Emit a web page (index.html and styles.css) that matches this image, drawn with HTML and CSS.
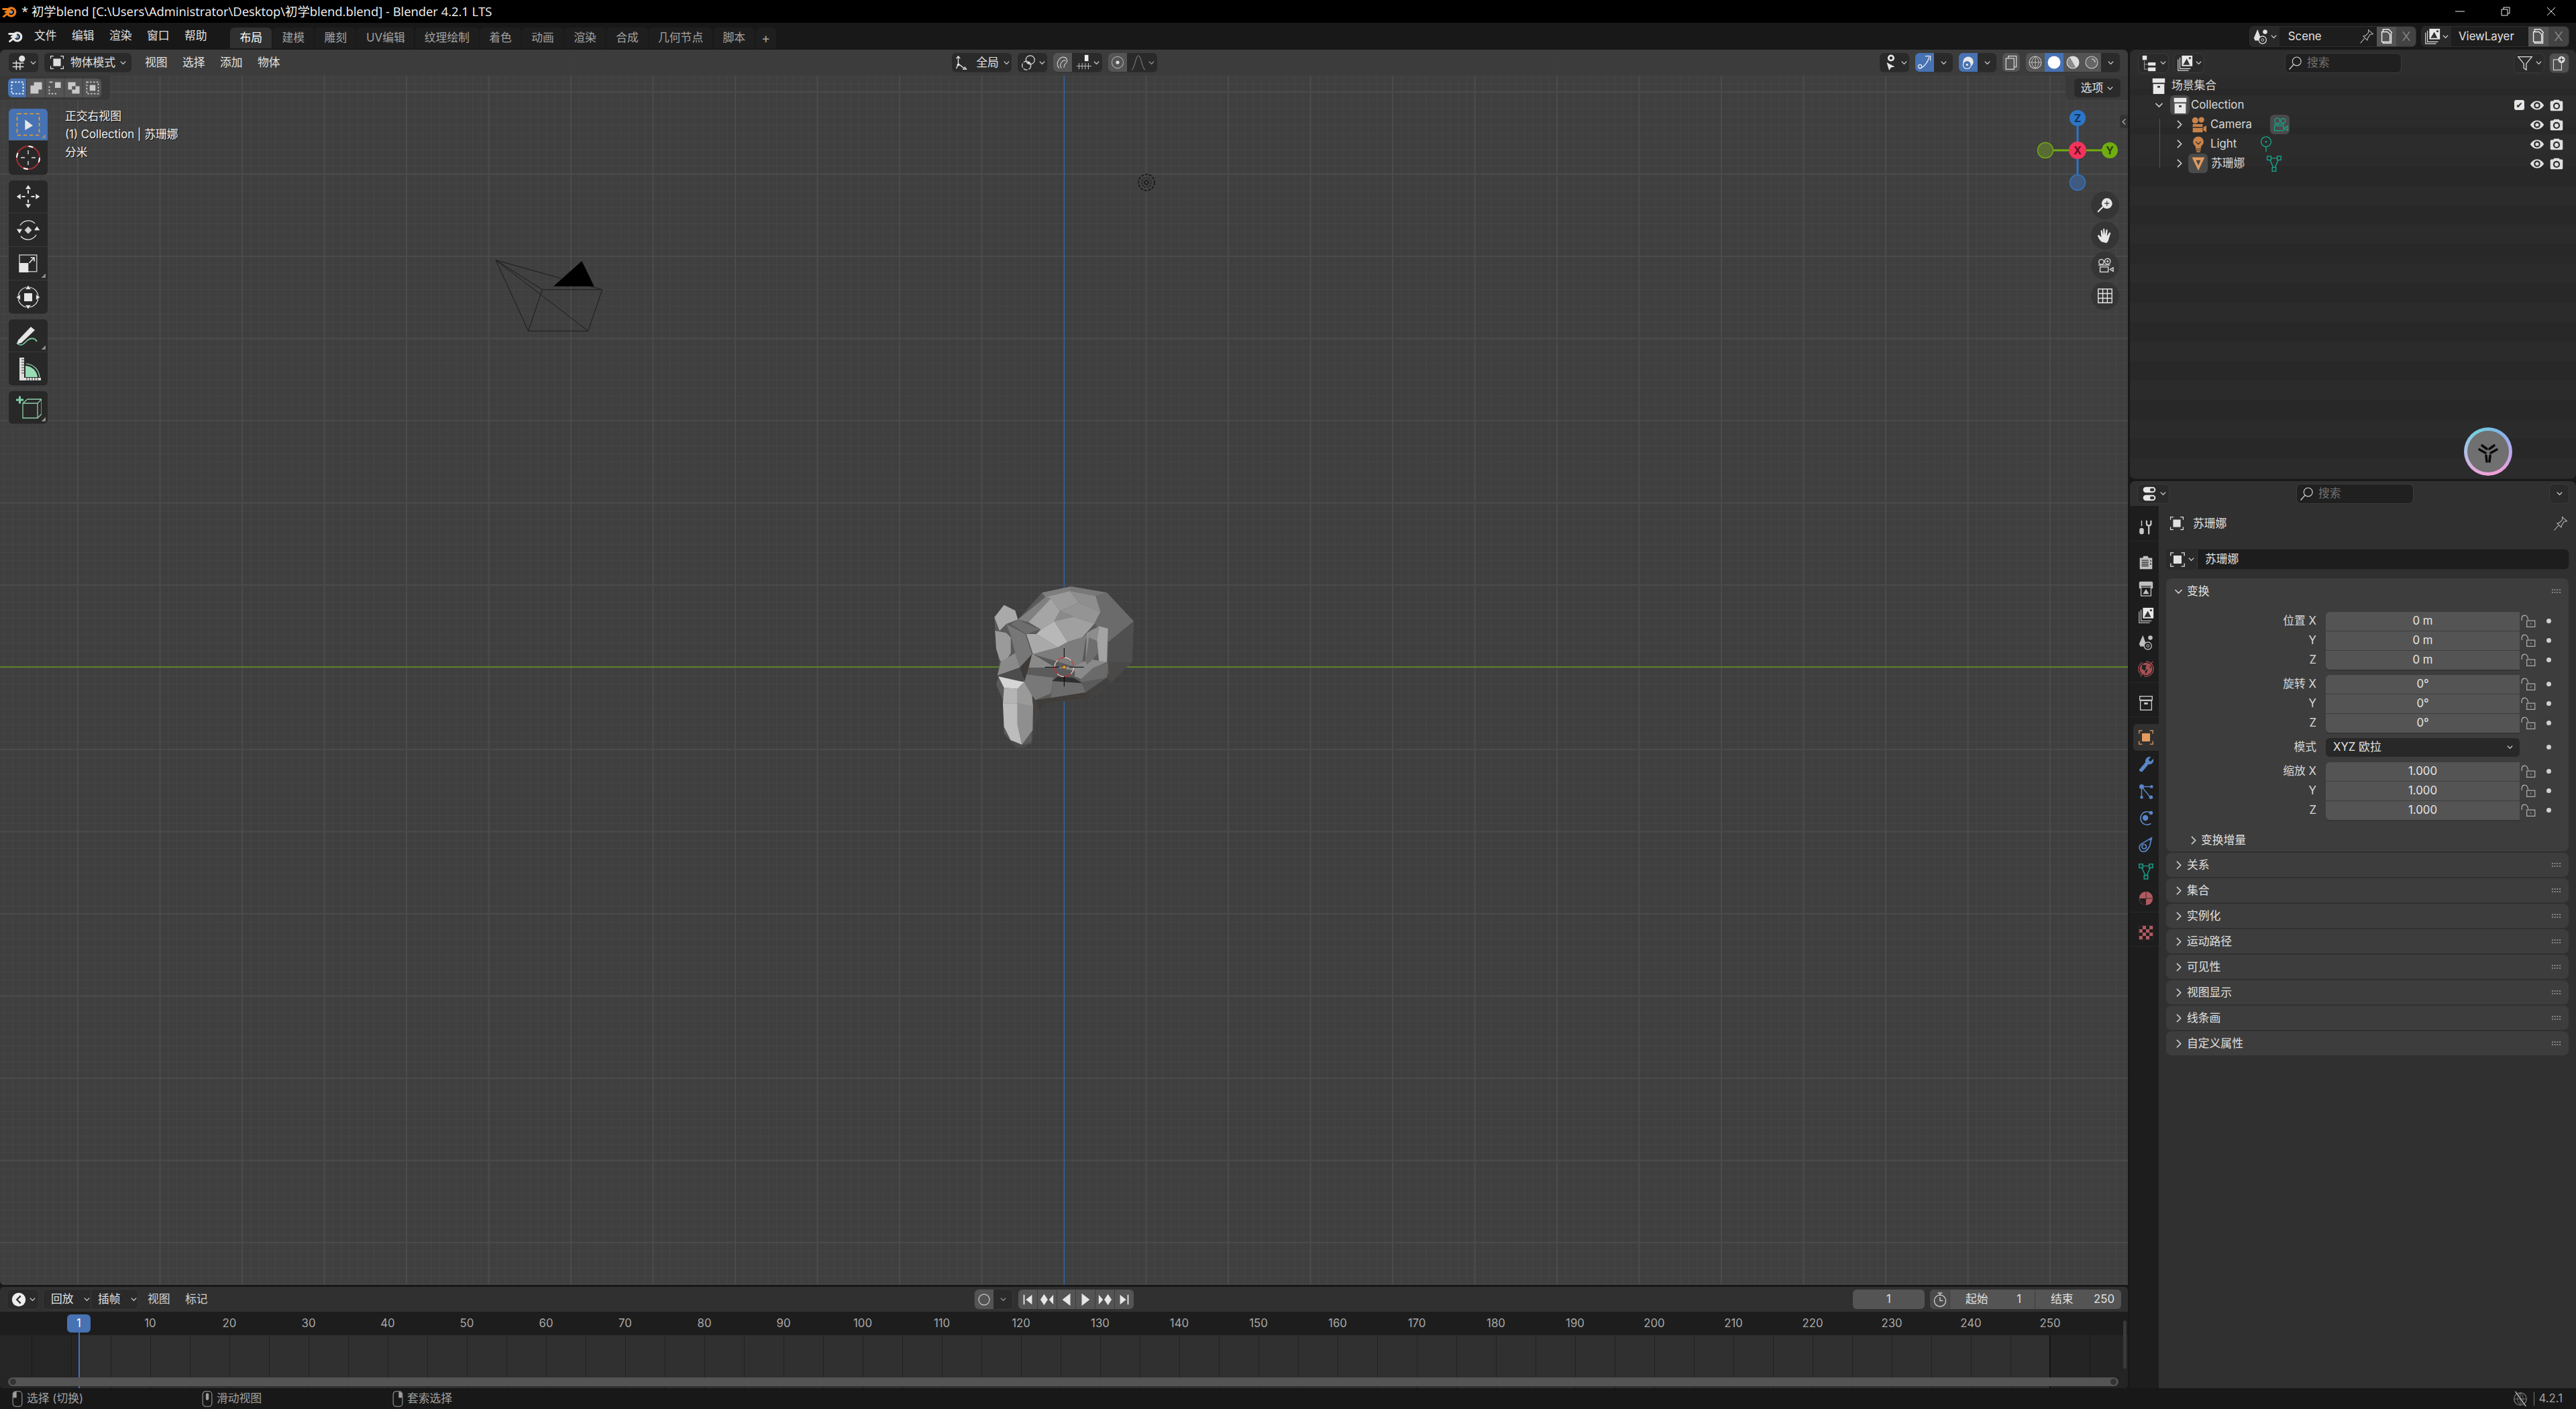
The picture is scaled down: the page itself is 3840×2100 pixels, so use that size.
FILE: index.html
```html
<!DOCTYPE html>
<html lang="zh-CN">
<head>
<meta charset="utf-8">
<title>Blender</title>
<link rel="stylesheet" href="styles.css">
</head>
<body>
<svg class="defs" aria-hidden="true">
  <symbol id="blender" viewBox="0 0 28 28"><circle cx="16" cy="15" r="7" fill="none" stroke="currentColor" stroke-width="4"/><circle cx="16" cy="15" r="3" fill="#6f93c4"/><path d="M2 10h12M6 15l8-2M3 23l10-8" fill="none" stroke="currentColor" stroke-width="3.4" stroke-linecap="round"/></symbol>
  <symbol id="view3d" viewBox="0 0 28 28"><circle cx="18" cy="8" r="5" fill="currentColor"/><path d="M3 15h18M3 21h18M9 11v15M15 15v11" fill="none" stroke="currentColor" stroke-width="1.6"/></symbol>
  <symbol id="object" viewBox="0 0 28 28"><path d="M8 3H3v5M20 3h5v5M3 20v5h5M25 20v5h-5" fill="none" stroke="currentColor" stroke-width="1.4"/><rect x="7.5" y="7.5" width="13" height="13" fill="currentColor"/></symbol>
  <symbol id="chev-d" viewBox="0 0 12 12"><path d="M2 4l4 4 4-4" fill="none" stroke="currentColor" stroke-width="1.4"/></symbol>
  <symbol id="chev-r" viewBox="0 0 12 12"><path d="M4 1.5L8.5 6 4 10.5" fill="none" stroke="currentColor" stroke-width="1.3"/></symbol>
  <symbol id="sel1" viewBox="0 0 28 28"><rect x="4" y="4" width="20" height="20" fill="none" stroke="#fff" stroke-width="2" stroke-dasharray="3 2.6"/></symbol>
  <symbol id="sel2" viewBox="0 0 28 28"><path d="M10 4h14v13h-6v7H4V10h6z" fill="#c8c8c8"/></symbol>
  <symbol id="sel3" viewBox="0 0 28 28"><path d="M14 4h10v10H14z" fill="#c8c8c8"/><path d="M4 11v13h13" fill="none" stroke="#c8c8c8" stroke-width="2" stroke-dasharray="3 2.6"/><path d="M4 4h6" stroke="#c8c8c8" stroke-width="2"/></symbol>
  <symbol id="sel4" viewBox="0 0 28 28"><path fill-rule="evenodd" d="M4 4h13v7h7v13H11v-7H4zM11 11v6h6v-6z" fill="#c8c8c8"/></symbol>
  <symbol id="sel5" viewBox="0 0 28 28"><rect x="4" y="4" width="20" height="20" fill="none" stroke="#c8c8c8" stroke-width="2" stroke-dasharray="3 2.6"/><rect x="9" y="9" width="10" height="10" fill="#c8c8c8"/></symbol>

  <symbol id="t-select" viewBox="0 0 40 40"><rect x="3.5" y="3.5" width="33" height="32" rx="1" fill="none" stroke="#eba02a" stroke-width="1.6" stroke-dasharray="5.4 3.6"/><path d="M15.3 12.3L27 21.3 15.3 28z" fill="#e6e6e6"/></symbol>
  <symbol id="t-cursor" viewBox="0 0 40 40"><circle cx="20" cy="20" r="17" fill="none" stroke="#a03030" stroke-width="2"/><circle cx="20" cy="20" r="17" fill="none" stroke="#fff" stroke-width="2" stroke-dasharray="7 19.7"/><path d="M20 9v6M20 25v6M9 20h6M25 20h6" stroke="#ddd" stroke-width="1.4"/></symbol>
  <symbol id="t-move" viewBox="0 0 40 40"><path d="M20 2.7l-4 6h8zM20 37.3l-4-6h8zM2.7 20l6-4v8zM37.3 20l-6-4v8z" fill="#e6e6e6"/><path d="M20 10.5v5M20 24.5v5M10.5 20h5M24.5 20h5" stroke="#e6e6e6" stroke-width="2"/></symbol>
  <symbol id="t-rotate" viewBox="0 0 40 40"><path d="M20 14.5L25.5 20 20 25.5 14.5 20z" fill="#d0d0d0"/><path d="M8 13a14 14 0 0 1 22-3M32 27a14 14 0 0 1-23 2" fill="none" stroke="#e6e6e6" stroke-width="1.3"/><path d="M3 18.5h8l-4 6.5zM29 20.300h8.300l-4.300-6z" fill="#e6e6e6"/></symbol>
  <symbol id="t-scale" viewBox="0 0 40 40"><path d="M7 20V7h25.700v24.700H20" fill="none" stroke="#bbb" stroke-width="1.600"/><rect x="6.300" y="19" width="14" height="14" fill="#e6e6e6"/><path d="M21.500 19l7-7.500M23.500 11h5.500v5.500" fill="none" stroke="#e6e6e6" stroke-width="1.700"/></symbol>
  <symbol id="t-xform" viewBox="0 0 40 40"><circle cx="20" cy="20" r="15" fill="none" stroke="#e6e6e6" stroke-width="1.200"/><rect x="14" y="14" width="12" height="12" fill="#e6e6e6"/><path d="M20 2l-4.500 6.500h9zM20 38l-4.500-6.500h9zM2 20l6.500-4.500v9zM38 20l-6.500-4.500v9z" fill="#e6e6e6" stroke="#282828" stroke-width=".8"/></symbol>
  <symbol id="t-annot" viewBox="0 0 40 40"><path d="M5 27l19-20 6 5-20 19-7 2z" fill="#e6e6e6"/><path d="M3 31c6 7 11 1 15-3s11-6 15 1" fill="none" stroke="#7fd0a5" stroke-width="1.600"/></symbol>
  <symbol id="t-measure" viewBox="0 0 40 40"><path d="M7 3h7v30h25v4H7z" fill="#ddd"/><path d="M10 6h4M10 10h4M10 14h4M10 18h4M10 22h4M10 26h4M18 33v4M22 33v4M26 33v4M30 33v4M34 33v4" stroke="#333" stroke-width="1"/><path d="M16 15c10 1 17 8 18 17H16z" fill="#9adcb5"/><path d="M17 12c11 1 19 9 20 20" fill="none" stroke="#9adcb5" stroke-width="1.200"/></symbol>
  <symbol id="t-add" viewBox="0 0 40 40"><path d="M2 9h11M7.500 3.500v11" stroke="#7fd0a5" stroke-width="3"/><path d="M12 14h22v22H12zM12 14l7-6h21v22l-6 6M34 14l6-6" fill="none" stroke="#8fd0aa" stroke-width="1.300"/></symbol>

  <symbol id="eye" viewBox="0 0 28 28"><path d="M3 14c3-5 7-7 11-7s8 2 11 7c-3 5-7 7-11 7s-8-2-11-7z" fill="#e0e0e0"/><circle cx="14" cy="14" r="5.200" fill="#2c2c2c"/><circle cx="14" cy="14" r="2.800" fill="#e0e0e0"/></symbol>
  <symbol id="rcam" viewBox="0 0 28 28"><path d="M4 9q0-2 2-2h3l1-2h8l1 2h3q2 0 2 2v12q0 2-2 2H6q-2 0-2-2z" fill="#e0e0e0"/><circle cx="14" cy="15" r="5.500" fill="#2c2c2c"/><circle cx="14" cy="15" r="3.200" fill="#e0e0e0"/></symbol>
  <symbol id="lock" viewBox="0 0 28 28"><rect x="11.500" y="13" width="13" height="10" fill="none" stroke="#a8a8a8" stroke-width="1.400"/><path d="M3.500 13V9a4.600 4.600 0 0 1 8.800-1.800l1.500 4.300" fill="none" stroke="#a8a8a8" stroke-width="1.400"/><path d="M18 17v2" stroke="#a8a8a8" stroke-width="1.400"/></symbol>
  <symbol id="pin" viewBox="0 0 28 28"><path d="M17 3l8 7-5 1-4 6-1 4-7-7 4-1 5-5zM10 18l-7 8" fill="none" stroke="#b0b0b0" stroke-width="1.300"/></symbol>
  <symbol id="doc" viewBox="0 0 28 28"><path d="M8 11v14h13V9M8 7V3h9l5 5v1" fill="none" stroke="#eee" stroke-width="1.500"/><path d="M6 7h9l4 4v12H6z" fill="#545454" stroke="#eee" stroke-width="1.500"/></symbol>
  <symbol id="xmark" viewBox="0 0 28 28"><path d="M8 6l12 16M20 6L8 22" stroke="#8c8c8c" stroke-width="1.700"/></symbol>
  <symbol id="search" viewBox="0 0 28 28"><circle cx="16" cy="11" r="7.500" fill="none" stroke="#d0d0d0" stroke-width="1.400"/><path d="M10.500 16.500L3 25" stroke="#d0d0d0" stroke-width="1.600"/></symbol>
  <symbol id="filter" viewBox="0 0 28 28"><path d="M3 4h22l-9 11v10l-4-3v-7z" fill="none" stroke="#ddd" stroke-width="1.400"/></symbol>
  <symbol id="scene" viewBox="0 0 28 28"><circle cx="21" cy="7" r="3.500" fill="currentColor"/><path d="M9 3l5 14-2 4H5l-2-4z" fill="currentColor"/><circle cx="17" cy="20" r="6" fill="#282828" stroke="currentColor" stroke-width="1.400"/><circle cx="17" cy="20" r="2" fill="none" stroke="currentColor"/></symbol>
  <symbol id="layers" viewBox="0 0 28 28"><path d="M3 8v18h17M6 5v18h17" fill="none" stroke="currentColor" stroke-width="1.300"/><rect x="9" y="2" width="17" height="17" fill="#e8e8e8"/><path d="M11 17l6-10 5 10z" fill="#333"/><circle cx="22" cy="6" r="1.800" fill="#333"/></symbol>
  <symbol id="outl" viewBox="0 0 28 28"><rect x="3" y="2" width="7" height="7" fill="#e6e6e6"/><path d="M6 10v14h6M6 16h6" stroke="#aaa" fill="none"/><rect x="12" y="13" width="12" height="5" fill="#e6e6e6"/><rect x="12" y="21" width="12" height="6" fill="#e6e6e6"/></symbol>
  <symbol id="coll" viewBox="0 0 28 28"><rect x="4" y="2" width="20" height="7" fill="#e8e8e8"/><rect x="5" y="11" width="18" height="16" fill="#e8e8e8"/><rect x="12" y="14" width="4" height="3" fill="#333"/></symbol>
  <symbol id="addcol" viewBox="0 0 28 28"><rect x="4" y="8" width="14" height="18" fill="none" stroke="#ddd" stroke-width="1.300"/><circle cx="18" cy="8" r="6" fill="#ddd"/><path d="M18 4.500v7M14.500 8h7" stroke="#333" stroke-width="1.400"/></symbol>
  <symbol id="cursorarr" viewBox="0 0 28 28"><path d="M8 14l13 7-6 1-3 5z" fill="#e6e6e6"/><circle cx="15" cy="7" r="5.500" fill="#e6e6e6"/><circle cx="15" cy="7" r="2.400" fill="#282828"/></symbol>
  <symbol id="gizmo" viewBox="0 0 28 28"><path d="M5 25c7-2 14-10 17-20" fill="none" stroke="#eee" stroke-width="1.500"/><circle cx="6" cy="21" r="3" fill="none" stroke="#eee" stroke-width="1.400"/><path d="M15 3h9v8" fill="none" stroke="#eee" stroke-width="1.400"/></symbol>
  <symbol id="overlay" viewBox="0 0 28 28"><circle cx="14" cy="13" r="9" fill="#e6e6e6"/><circle cx="12" cy="18" r="7" fill="#4772b3" stroke="#e6e6e6" stroke-width="1.500"/><circle cx="12" cy="18" r="2" fill="#e6e6e6"/></symbol>
  <symbol id="xray" viewBox="0 0 28 28"><rect x="9" y="3" width="14" height="19" fill="none" stroke="#ddd" stroke-width="1.400"/><rect x="5" y="7" width="14" height="19" fill="#545454" stroke="#ddd" stroke-width="1.400"/></symbol>
  <symbol id="wire" viewBox="0 0 28 28"><circle cx="14" cy="14" r="10.500" fill="none" stroke="#ccc" stroke-width="1.300"/><path d="M3.500 14h21M14 3.500v21M14 3.500c-8 6-8 15 0 21M14 3.500c8 6 8 15 0 21" fill="none" stroke="#ccc"/></symbol>
  <symbol id="solid" viewBox="0 0 28 28"><circle cx="14" cy="14" r="11" fill="#fff"/></symbol>
  <symbol id="matp" viewBox="0 0 28 28"><circle cx="14" cy="14" r="10.500" fill="#8a8a8a" stroke="#ddd" stroke-width="1.300"/><path d="M14 3.500a10.500 10.500 0 0 1 0 21z" fill="#ddd" transform="rotate(-30 14 14)"/></symbol>
  <symbol id="rend" viewBox="0 0 28 28"><circle cx="14" cy="14" r="10.500" fill="#666" stroke="#ccc" stroke-width="1.300"/><path d="M14 8a6 6 0 0 1 6 6" stroke="#ddd" fill="none" stroke-width="1.400"/></symbol>
  <symbol id="axes" viewBox="0 0 28 28"><path d="M8 4v12l10 8M8 16l-3 8M8 4L5 8M8 4l3 4M15 25h6l-3-4" fill="none" stroke="#e6e6e6" stroke-width="1.400"/><circle cx="8" cy="18" r="2" fill="#e6e6e6"/></symbol>
  <symbol id="link" viewBox="0 0 28 28"><circle cx="17" cy="10" r="7" fill="none" stroke="#ddd" stroke-width="1.300"/><circle cx="11" cy="19" r="7" fill="none" stroke="#ddd" stroke-width="1.300" stroke-dasharray="7 2"/><circle cx="14" cy="14.500" r="2" fill="#ddd"/></symbol>
  <symbol id="magnet" viewBox="0 0 28 28"><path d="M8 24c-5-5-4-10 0-15 3-5 10-6 13-1 2 4 0 7-3 9l-2 6M12 24c-3-4-2-8 1-11 2-3 6-3 6-1" fill="none" stroke="#c8c8c8" stroke-width="1.400"/></symbol>
  <symbol id="increment" viewBox="0 0 28 28"><rect x="16" y="2" width="6" height="10" fill="#eee"/><path d="M3 20h24M7 15v10M12 15v10M17 15v10M22 15v10" stroke="#bbb" stroke-width="1.100"/></symbol>
  <symbol id="propcirc" viewBox="0 0 28 28"><circle cx="14" cy="14" r="10" fill="none" stroke="#aaa" stroke-width="1.300"/><circle cx="14" cy="14" r="3" fill="#ddd"/></symbol>
  <symbol id="falloff" viewBox="0 0 28 28"><path d="M3 26C9 24 9 3 14 3s5 21 11 23" fill="none" stroke="#999" stroke-width="1.400"/></symbol>
  <symbol id="camera-o" viewBox="0 0 28 28"><circle cx="9" cy="7" r="5" fill="#c8824a"/><circle cx="19" cy="6" r="4.500" fill="#c8824a"/><path d="M5 13h16v13H5z" fill="#c8824a"/><path d="M22 18l5-3v11l-5-3z" fill="#c8824a"/><path d="M5 18h16" stroke="#2a2a2a" stroke-width="1.500"/></symbol>
  <symbol id="light-o" viewBox="0 0 28 28"><circle cx="14" cy="10" r="8.500" fill="#c8824a"/><path d="M9 16h10l-1 5h-8z" fill="#c8824a"/><path d="M10 23h8M11 26h6" stroke="#c8824a" stroke-width="1.700"/><path d="M10 10l4 4 4-4" stroke="#2a2a2a" fill="none" stroke-width="1.300"/></symbol>
  <symbol id="mesh-o" viewBox="0 0 28 28"><path d="M3 3h22L14 26z" fill="#e39a5e"/><path d="M10 8h8l-4 9z" fill="#454545"/></symbol>
  <symbol id="camera-g" viewBox="0 0 28 28"><circle cx="9" cy="7" r="4.500" fill="none" stroke="#16a58a" stroke-width="1.500"/><circle cx="19" cy="7" r="4" fill="none" stroke="#16a58a" stroke-width="1.500"/><path d="M4 16h16v8H4zM21 20l6-4v8z" fill="none" stroke="#16a58a" stroke-width="1.500"/><path d="M3 13h18" stroke="#16a58a" stroke-width="1.500"/></symbol>
  <symbol id="light-g" viewBox="0 0 28 28"><circle cx="14" cy="10" r="8" fill="none" stroke="#16a58a" stroke-width="1.500"/><path d="M14 18v8" stroke="#16a58a" stroke-width="1.500"/><circle cx="14" cy="10" r="1.500" fill="#16a58a"/></symbol>
  <symbol id="mesh-g" viewBox="0 0 28 28"><path d="M6 5h16L14 23z" fill="none" stroke="#16a58a" stroke-width="1.500"/><rect x="3" y="2" width="6" height="6" fill="#282828" stroke="#16a58a" stroke-width="1.500"/><rect x="19" y="2" width="6" height="6" fill="#282828" stroke="#16a58a" stroke-width="1.500"/><rect x="11" y="20" width="6" height="6" fill="#282828" stroke="#16a58a" stroke-width="1.500"/></symbol>

  <symbol id="p-tool" viewBox="0 0 28 28"><path d="M7 3v9" stroke="#c8c8c8" stroke-width="1.600"/><rect x="3.500" y="15" width="7" height="10" rx="3" fill="#c8c8c8"/><path d="M15 3v5q0 3 3 3h1q3 0 3-3V3M18.500 11v14" fill="none" stroke="#c8c8c8" stroke-width="2.400"/></symbol>
  <symbol id="p-render" viewBox="0 0 28 28"><path d="M4 8h5l1-3h7l1 3h6v18H4z" fill="#c0c0c0"/><path d="M7 12h11M7 15h11M7 18h11M7 21h11" stroke="#333" stroke-width="1.500"/><circle cx="21.500" cy="13" r="1.200" fill="#333"/><circle cx="21.500" cy="18" r="1.200" fill="#333"/></symbol>
  <symbol id="p-output" viewBox="0 0 28 28"><path d="M3 5q0-2 2-2h18q2 0 2 2v9h-3v-4H6v4H3z" fill="#c0c0c0"/><path d="M6 12h16v14H6z" fill="none" stroke="#c0c0c0" stroke-width="1.500"/><path d="M9 23l5-8 5 8z" fill="#c0c0c0"/></symbol>
  <symbol id="p-world" viewBox="0 0 28 28"><circle cx="14" cy="14" r="10" fill="#a84f55"/><path d="M8 7l7 1-2 5 4 3-3 6-3-6-4-2zM18 8l5 4-2 1z" fill="#222"/><path d="M25 2L5 26" stroke="#a84f55" stroke-width="1.400"/><circle cx="14" cy="14" r="12" fill="none" stroke="#a84f55" stroke-width="1.200" stroke-dasharray="22 6"/></symbol>
  <symbol id="p-archive" viewBox="0 0 28 28"><rect x="4" y="3" width="20" height="6" fill="none" stroke="#c8c8c8" stroke-width="1.500"/><rect x="5" y="10" width="18" height="15" fill="none" stroke="#c8c8c8" stroke-width="1.500"/><rect x="11" y="13" width="6" height="3" fill="#c8c8c8"/></symbol>
  <symbol id="p-wrench" viewBox="0 0 28 28"><path d="M26 5c1 6-3 10-8 9L8 26q-4 1-5-3L13 11c-1-5 3-10 9-9l-4 5 3 3z" fill="#5a86c8"/></symbol>
  <symbol id="p-part" viewBox="0 0 28 28"><path d="M7 7l14 17M7 7v17M7 7h16" stroke="#5a86c8" stroke-width="1.500" fill="none"/><circle cx="7" cy="7" r="3.800" fill="#5a86c8"/><circle cx="23" cy="7" r="2.400" fill="#5a86c8"/><circle cx="7" cy="24" r="2.400" fill="#5a86c8"/><circle cx="22" cy="24" r="3" fill="#5a86c8"/></symbol>
  <symbol id="p-phys" viewBox="0 0 28 28"><path d="M20 5a10.500 10.500 0 1 0 2 18" fill="none" stroke="#5a86c8" stroke-width="1.800"/><circle cx="13" cy="14" r="4.500" fill="#5a86c8"/><circle cx="22" cy="6" r="3" fill="#5a86c8"/></symbol>
  <symbol id="p-const" viewBox="0 0 28 28"><path d="M23 3L6 13c-5 5-2 13 5 12 4 0 6-4 9-9zM23 3" fill="none" stroke="#5a86c8" stroke-width="1.800"/><circle cx="11" cy="17" r="3.500" fill="none" stroke="#5a86c8" stroke-width="1.800"/><circle cx="21" cy="6" r="1.500" fill="#5a86c8"/></symbol>
  <symbol id="p-mat" viewBox="0 0 28 28"><circle cx="14" cy="14" r="11" fill="#b05a60"/><path d="M14 14H3.500A11 11 0 0 0 14 25z" fill="#1f1f1f"/><path d="M14 3v11h10.500" stroke="#1f1f1f" stroke-width=".8" fill="none"/></symbol>
  <symbol id="p-tex" viewBox="0 0 28 28"><rect x="3" y="3" width="22" height="22" fill="#b05a60"/><path d="M3 3h5.500v5.500H3zM14 3h5.500v5.500H14zM8.500 8.500H14V14H8.500zM19.500 8.500H25V14h-5.500zM3 14h5.500v5.500H3zM14 14h5.500v5.500H14zM8.500 19.500H14V25H8.500zM19.500 19.500H25V25h-5.500z" fill="#1d1d1d"/></symbol>

  <symbol id="m-left" viewBox="0 0 18 28"><rect x="1" y="1" width="16" height="26" rx="5" fill="none" stroke="#a0a0a0" stroke-width="1.200"/><path d="M1.500 12V6q0-4.500 6-4.500V12z" fill="#a0a0a0"/></symbol>
  <symbol id="m-mid" viewBox="0 0 18 28"><rect x="1" y="1" width="16" height="26" rx="5" fill="none" stroke="#a0a0a0" stroke-width="1.200"/><rect x="6.500" y="4" width="5" height="12" rx="2" fill="#a0a0a0"/></symbol>
  <symbol id="m-right" viewBox="0 0 18 28"><rect x="1" y="1" width="16" height="26" rx="5" fill="none" stroke="#a0a0a0" stroke-width="1.200"/><path d="M16.500 12V6q0-4.500-6-4.500V12z" fill="#a0a0a0"/></symbol>
  <symbol id="clock" viewBox="0 0 28 28"><circle cx="14" cy="16" r="10" fill="none" stroke="#ddd" stroke-width="1.400"/><path d="M14 10v6h5M10 2.500h8M14 3v3" fill="none" stroke="#ddd" stroke-width="1.500"/></symbol>
  <symbol id="tl" viewBox="0 0 28 28"><circle cx="14" cy="14" r="11" fill="#eee"/><path d="M17 8l-6 6 6 6" fill="none" stroke="#333" stroke-width="2.500"/></symbol>
  <symbol id="tr-start" viewBox="0 0 24 24"><path d="M5 4h2v16H5zM19 4v16L9 12z" fill="#e6e6e6"/></symbol>
  <symbol id="tr-kprev" viewBox="0 0 24 24"><path d="M7 3l6 9-6 9-6-9zM22 4v16l-7-8z" fill="#e6e6e6"/></symbol>
  <symbol id="tr-rev" viewBox="0 0 24 24"><path d="M18 2v20L5 12z" fill="#e6e6e6"/></symbol>
  <symbol id="tr-play" viewBox="0 0 24 24"><path d="M6 2v20l13-10z" fill="#e6e6e6"/></symbol>
  <symbol id="tr-knext" viewBox="0 0 24 24"><path d="M2 4v16l7-8zM17 3l6 9-6 9-6-9z" fill="#e6e6e6"/></symbol>
  <symbol id="tr-end" viewBox="0 0 24 24"><path d="M17 4h2v16h-2zM5 4v16l10-8z" fill="#e6e6e6"/></symbol>
  <symbol id="globe-off" viewBox="0 0 28 28"><circle cx="14" cy="14" r="10" fill="none" stroke="#888" stroke-width="1.200"/><path d="M4 14h20M14 4v20M14 4c-6 6-6 14 0 20M14 4c6 6 6 14 0 20" fill="none" stroke="#777"/><path d="M6 2l17 24" stroke="#bbb" stroke-width="1.500"/></symbol>
  <symbol id="nav-zoom" viewBox="0 0 28 28"><circle cx="17" cy="11" r="8.500" fill="#e6e6e6"/><path d="M17 7v8M13 11h8" stroke="#333" stroke-width="1.300"/><path d="M10 17l-7 7" stroke="#e6e6e6" stroke-width="2.400" stroke-linecap="round"/></symbol>
  <symbol id="nav-hand" viewBox="0 0 28 28"><path d="M8 24C5 21 3 17 2 14l2-1 4 4-1-11 2-1 2 8V3h2l1 10 2-9 2 1-1 10 4-6 2 1-3 9c-1 4-2 6-4 7z" fill="#e6e6e6"/></symbol>
  <symbol id="nav-cam" viewBox="0 0 28 28"><circle cx="8" cy="8" r="4" fill="none" stroke="#e6e6e6" stroke-width="1.400"/><circle cx="18" cy="7" r="4.500" fill="none" stroke="#e6e6e6" stroke-width="1.400"/><circle cx="18" cy="7" r="1.500" fill="#e6e6e6"/><path d="M6 16h13v8H6zM27 17v6l-5-3z" fill="none" stroke="#e6e6e6" stroke-width="1.400"/><path d="M3 13h19" stroke="#e6e6e6" stroke-width="1.400"/></symbol>
  <symbol id="nav-grid" viewBox="0 0 28 28"><path d="M3 3h22v22H3zM3 10.300h22M3 17.700h22M10.300 3v22M17.700 3v22" fill="none" stroke="#e6e6e6" stroke-width="1.500"/></symbol>
</svg>

<header class="titlebar">
  <svg class="title-logo"><use href="#blender"/></svg>
  <span class="title-text">* 初学blend [C:\Users\Administrator\Desktop\初学blend.blend] - Blender 4.2.1 LTS</span>
  <div class="win-ctrls">
    <svg viewBox="0 0 14 14"><path d="M0 7h14" stroke="#eee" stroke-width="1"/></svg>
    <svg viewBox="0 0 14 14"><path d="M1 4h9v9H1zM4 4V1h9v9h-3" fill="none" stroke="#eee"/></svg>
    <svg viewBox="0 0 14 14"><path d="M1 1l12 12M13 1L1 13" stroke="#eee"/></svg>
  </div>
</header>

<nav class="topbar">
  <svg class="top-logo"><use href="#blender"/></svg>
  <div class="menus">
    <span>文件</span><span>编辑</span><span>渲染</span><span>窗口</span><span>帮助</span>
  </div>
  <div class="tabs">
    <span class="tab active">布局</span><span class="tab">建模</span><span class="tab">雕刻</span><span class="tab">UV编辑</span><span class="tab">纹理绘制</span><span class="tab">着色</span><span class="tab">动画</span><span class="tab">渲染</span><span class="tab">合成</span><span class="tab">几何节点</span><span class="tab">脚本</span><span class="tab add">+</span>
  </div>
  <div class="scene-box">
    <div class="slot scene-slot">
      <span class="slot-ico w44"><svg class="i26"><use href="#scene"/></svg><svg class="ch"><use href="#chev-d"/></svg></span>
      <span class="slot-name w146">Scene<svg class="i24 pin-end"><use href="#pin"/></svg></span>
      <span class="slot-btn"><svg class="i26"><use href="#doc"/></svg></span>
      <span class="slot-btn"><svg class="i24"><use href="#xmark"/></svg></span>
    </div>
    <div class="slot vl-slot">
      <span class="slot-ico w44"><svg class="i26"><use href="#layers"/></svg><svg class="ch"><use href="#chev-d"/></svg></span>
      <span class="slot-name w115">ViewLayer</span>
      <span class="slot-btn"><svg class="i26"><use href="#doc"/></svg></span>
      <span class="slot-btn"><svg class="i24"><use href="#xmark"/></svg></span>
    </div>
  </div>
</nav>

<main class="workspace">
  <div class="col-left">
    <section class="viewport">
      <div class="axis-x"></div>
      <div class="axis-z"></div>

      <svg class="cam-wire" viewBox="0 0 750 480">
        <path d="M117 83L325 215M117 83L263 400M117 83L530 400M117 83L410 165M530 198L593 215M325 215L263 400H530L593 215H325" fill="none" stroke="#1c1c1c" stroke-width="3"/>
        <path d="M375 200L502 87 557 200z" fill="#000"/>
      </svg>
      <svg class="light-wire" viewBox="0 0 32 32">
        <circle cx="16" cy="16" r="12" fill="none" stroke="#141414" stroke-width="1.600" stroke-dasharray="4 2"/>
        <circle cx="16" cy="16" r="7" fill="none" stroke="#141414" stroke-width="1.300" stroke-dasharray="2 2"/>
        <path d="M16 12.500l3.500 3.500-3.500 3.500-3.500-3.500z" fill="none" stroke="#141414" stroke-width="1.300"/>
      </svg>
      <svg class="monkey" viewBox="0 0 1080 900">
        <path fill="#5a5a5a" d="M590 102L750 130 870 258 862 440 770 530 680 600 480 625 445 660 420 770 410 805 350 825 290 760 285 610 255 540 265 505 270 430 255 380 247 240 290 185 340 210 352 250 460 130z"/>
        <path fill="#7e7e7e" d="M460 130L590 102 585 122 475 150z"/>
        <path fill="#787878" d="M590 102L750 130 700 145 585 122z"/>
        <path fill="#808080" d="M475 150L352 250 400 262 500 155z"/>
        <path fill="#9a9a9a" d="M475 150L585 122 625 175 540 212 500 155z"/>
        <path fill="#a5a5a5" d="M500 155L540 212 515 258 455 295 400 262z"/>
        <path fill="#8e8e8e" d="M585 122L700 145 722 215 625 175z"/>
        <path fill="#949494" d="M625 175L722 215 695 268 600 238 540 212z"/>
        <path fill="#8a8a8a" d="M540 212L600 238 515 258z"/>
        <path fill="#a0a0a0" d="M600 238L695 268 640 330 575 350 515 258z"/>
        <path fill="#b8b8b8" d="M515 258L575 350 530 375 435 315 455 295z"/>
        <path fill="#a9a9a9" d="M435 315L530 375 420 405 390 315z"/>
        <path fill="#6b6b6b" d="M700 145L750 130 870 258 757 350 695 268 722 215z"/>
        <path fill="#4f4f4f" d="M757 350L870 258 862 440 755 440z"/>
        <path fill="#4a4947" d="M755 440L862 440 770 530 740 510 760 490z"/>
        <path fill="#434140" d="M750 510L770 530 680 600 655 575z"/>
        <path fill="#3f3c39" d="M655 575L680 600 480 625 445 660 430 610 500 600z"/>
        <path fill="#7c7c7c" d="M575 350L640 330 690 290 655 340 640 440 600 460 420 405 530 375z"/>
        <path fill="#8a8a8a" d="M420 405L520 465 400 465 415 405z"/>
        <path fill="#8a8a8a" d="M520 465L600 460 640 440 655 435 610 480z"/>
        <path fill="#5b5b5b" d="M400 465L520 465 610 480 605 500 635 530 510 510 385 495z"/>
        <path fill="#787878" d="M385 495L510 510 500 580 430 610 370 530z"/>
        <path fill="#6c6c6c" d="M510 510L635 530 655 575 500 600z"/>
        <path fill="#2f2f2f" d="M505 525L530 505 600 510 640 535z"/>
        <path fill="#6a6a6a" d="M635 530L750 510 755 445 610 480z"/>
        <path fill="#a4a4a4" d="M715 280L755 290 750 440 715 440 705 340z"/>
        <path fill="#8d8d8d" d="M660 310L715 280 705 340 690 420 680 460 610 500 605 480 655 435z"/>
        <path fill="#6e6e6e" d="M670 330L705 345 710 400 660 460 655 435z"/>
        <path fill="#8a8a8a" d="M610 485L690 430 752 440 690 465 635 515 605 505z"/>
        <path fill="#a9a9a9" d="M247 240L290 185 340 210 352 250 300 270 270 300z"/>
        <path fill="#6d6d6d" d="M352 250L450 295 390 315 320 270z"/>
        <path fill="#777" d="M300 270L385 315 415 405 360 465 340 400 320 320z"/>
        <path fill="#9a9a9a" d="M250 300L300 310 320 330 320 400 290 450 270 430 255 380z"/>
        <path fill="#8a8a8a" d="M275 440L340 400 360 465 260 500z"/>
        <path fill="#3d3a38" d="M415 405L400 465 382 525 360 465z"/>
        <path fill="#4c4c4c" d="M260 500L360 465 382 525 360 530z"/>
        <path fill="#454341" d="M415 590L430 610 445 660 420 770 415 800z"/>
        <path fill="#d5d5d5" d="M265 505L380 530 350 560 290 555z"/>
        <path fill="#9a9a9a" d="M350 560L380 530 415 590 420 640 350 625z"/>
        <path fill="#b4b4b4" d="M290 555L350 560 350 625 285 625z"/>
        <path fill="#8f8f8f" d="M350 625L420 640 418 745 370 810 350 720z"/>
        <path fill="#bcbcbc" d="M285 625L350 625 350 720 370 810 320 790 290 730z"/>
        <path fill="#4a4a4a" d="M320 790L370 810 412 800 380 825 345 825z"/>
        <circle cx="559" cy="463" r="43" fill="none" stroke="#f01f1f" stroke-width="3"/>
        <circle cx="559" cy="463" r="43" fill="none" stroke="#fff" stroke-width="3" stroke-dasharray="34 33.500"/>
        <path d="M559 378v42M559 505v45M473 463h64M582 463h65" stroke="#000" stroke-width="3"/>
        <circle cx="559" cy="463" r="8" fill="#f29a2e" stroke="#222" stroke-width="2"/>
      </svg>

      <div class="vp-header">
        <div class="hdr-left">
          <span class="btn w44"><svg class="i26"><use href="#view3d"/></svg><svg class="ch"><use href="#chev-d"/></svg></span>
          <span class="btn mode"><svg class="i24"><use href="#object"/></svg><span class="btn-text">物体模式</span><svg class="ch"><use href="#chev-d"/></svg></span>
          <div class="hdr-menu"><span>视图</span><span>选择</span><span>添加</span><span>物体</span></div>
        </div>
        <div class="hdr-center">
          <span class="btn orient"><svg class="i26"><use href="#axes"/></svg><span class="btn-text">全局</span><svg class="ch"><use href="#chev-d"/></svg></span>
          <span class="btn w44"><svg class="i26"><use href="#link"/></svg><svg class="ch"><use href="#chev-d"/></svg></span>
          <span class="btn split w73"><span class="seg gray"><svg class="i24"><use href="#magnet"/></svg></span><span class="seg grow"><svg class="i26"><use href="#increment"/></svg><svg class="ch"><use href="#chev-d"/></svg></span></span>
          <span class="btn split w73"><span class="seg gray"><svg class="i24"><use href="#propcirc"/></svg></span><span class="seg grow dim"><svg class="i26"><use href="#falloff"/></svg><svg class="ch"><use href="#chev-d"/></svg></span></span>
        </div>
        <div class="hdr-right">
          <span class="btn w44"><svg class="i26"><use href="#cursorarr"/></svg><svg class="ch"><use href="#chev-d"/></svg></span>
          <span class="btn split w56"><span class="seg blue"><svg class="i24"><use href="#gizmo"/></svg></span><span class="seg grow"><svg class="ch"><use href="#chev-d"/></svg></span></span>
          <span class="btn split w56"><span class="seg blue"><svg class="i24"><use href="#overlay"/></svg></span><span class="seg grow"><svg class="ch"><use href="#chev-d"/></svg></span></span>
          <span class="btn split w26"><span class="seg gray grow"><svg class="i24"><use href="#xray"/></svg></span></span>
          <span class="btn split w140"><span class="seg gray sh"><svg class="i24"><use href="#wire"/></svg></span><span class="seg blue sh"><svg class="i24"><use href="#solid"/></svg></span><span class="seg gray sh"><svg class="i24"><use href="#matp"/></svg></span><span class="seg gray sh"><svg class="i24"><use href="#rend"/></svg></span><span class="seg grow"><svg class="ch"><use href="#chev-d"/></svg></span></span>
        </div>
      </div>

      <div class="tool-row">
        <div class="tool-sel">
          <div class="sel-group">
            <span class="sel on"><svg><use href="#sel1"/></svg></span><span class="sel"><svg><use href="#sel2"/></svg></span><span class="sel"><svg><use href="#sel3"/></svg></span><span class="sel"><svg><use href="#sel4"/></svg></span><span class="sel"><svg><use href="#sel5"/></svg></span>
          </div>
        </div>
        <div class="tool-opt"><span class="opt-btn">选项<svg class="ch"><use href="#chev-d"/></svg></span></div>
      </div>

      <div class="vp-body">
        <aside class="toolbar">
          <div class="tgroup first">
            <span class="tool on tri h48"><svg><use href="#t-select"/></svg></span>
            <span class="tool h50"><svg><use href="#t-cursor"/></svg></span>
          </div>
          <div class="tgroup">
            <span class="tool h49"><svg><use href="#t-move"/></svg></span>
            <span class="tool h50"><svg><use href="#t-rotate"/></svg></span>
            <span class="tool tri h50"><svg><use href="#t-scale"/></svg></span>
            <span class="tool h49"><svg><use href="#t-xform"/></svg></span>
          </div>
          <div class="tgroup">
            <span class="tool tri h49"><svg><use href="#t-annot"/></svg></span>
            <span class="tool h49"><svg><use href="#t-measure"/></svg></span>
          </div>
          <div class="tgroup">
            <span class="tool tri h48"><svg><use href="#t-add"/></svg></span>
          </div>
        </aside>
        <div class="vp-info">
          <div>正交右视图</div>
          <div>(1) Collection | 苏珊娜</div>
          <div>分米</div>
        </div>
      </div>

      <div class="npanel-tab"><svg class="ch-l" viewBox="0 0 12 12"><path d="M8 1.500L3.500 6 8 10.500" fill="none" stroke="#bbb" stroke-width="1.300"/></svg></div>

      <svg class="orient-gizmo" viewBox="0 0 144 144">
        <path d="M72 24v96" stroke="#2d76c7" stroke-width="3"/>
        <path d="M24 72h96" stroke="#70ad10" stroke-width="3"/>
        <circle cx="72" cy="120" r="11.500" fill="#3f5a7e" stroke="#2d76c7" stroke-width="1.500"/>
        <circle cx="24" cy="72" r="11.500" fill="#5b6b35" stroke="#70ad10" stroke-width="1.500"/>
        <circle cx="72" cy="24" r="12" fill="#2d76c7"/>
        <circle cx="120" cy="72" r="12" fill="#70ad10"/>
        <circle cx="72" cy="72" r="13" fill="#f3335b"/>
        <text x="72" y="29.500" class="gz-t gz-z">Z</text>
        <text x="120" y="77.500" class="gz-t gz-y">Y</text>
        <text x="72" y="77.500" class="gz-t gz-x">X</text>
      </svg>
      <div class="nav-btns">
        <span class="nav"><svg><use href="#nav-zoom"/></svg></span>
        <span class="nav"><svg><use href="#nav-hand"/></svg></span>
        <span class="nav"><svg><use href="#nav-cam"/></svg></span>
        <span class="nav"><svg><use href="#nav-grid"/></svg></span>
      </div>
    </section>

    <section class="timeline">
      <div class="tl-header">
        <div class="tl-left">
          <span class="btn w46 tb"><svg class="i26"><use href="#tl"/></svg><svg class="ch"><use href="#chev-d"/></svg></span>
          <span class="btn tb tl-pop"><span class="pop">回放<svg class="ch"><use href="#chev-d"/></svg></span><span class="pop bl">插帧<svg class="ch"><use href="#chev-d"/></svg></span></span>
          <div class="hdr-menu dimmer"><span>视图</span><span>标记</span></div>
        </div>
        <div class="tl-center">
          <span class="btn split tb w56"><span class="seg gray rec"><svg class="i24" viewBox="0 0 24 24"><circle cx="12" cy="12" r="8" fill="none" stroke="#bbb" stroke-width="1.400"/></svg></span><span class="seg grow dim"><svg class="ch"><use href="#chev-d"/></svg></span></span>
          <span class="transport"><span><svg><use href="#tr-start"/></svg></span><span><svg><use href="#tr-kprev"/></svg></span><span><svg><use href="#tr-rev"/></svg></span><span><svg><use href="#tr-play"/></svg></span><span><svg><use href="#tr-knext"/></svg></span><span><svg><use href="#tr-end"/></svg></span></span>
        </div>
        <div class="tl-right">
          <span class="num-cur">1</span>
          <span class="range">
            <span class="r-clock"><svg class="i24"><use href="#clock"/></svg></span>
            <span class="r-f"><span>起始</span><span>1</span></span>
            <span class="r-f r-end"><span>结束</span><span>250</span></span>
          </span>
        </div>
      </div>
      <div class="ruler">
        <span>10</span><span>20</span><span>30</span><span>40</span><span>50</span><span>60</span><span>70</span><span>80</span><span>90</span><span>100</span><span>110</span><span>120</span><span>130</span><span>140</span><span>150</span><span>160</span><span>170</span><span>180</span><span>190</span><span>200</span><span>210</span><span>220</span><span>230</span><span>240</span><span>250</span>
      </div>
      <div class="tl-body"></div>
      <div class="playline"></div>
      <div class="playhead">1</div>
      <div class="hscroll"><i></i><i></i></div>
      <div class="vscroll"></div>
    </section>
  </div>

  <div class="col-right">
    <section class="outliner">
      <div class="ol-header">
        <span class="btn w44 ol"><svg class="i26"><use href="#outl"/></svg><svg class="ch"><use href="#chev-d"/></svg></span>
        <span class="btn w44 ol"><svg class="i26"><use href="#layers"/></svg><svg class="ch"><use href="#chev-d"/></svg></span>
        <span class="search ol-search"><svg class="i24"><use href="#search"/></svg>搜索</span>
        <span class="btn w44 ol"><svg class="i26"><use href="#filter"/></svg><svg class="ch"><use href="#chev-d"/></svg></span>
        <span class="btn w28 ol gray-btn"><svg class="i24"><use href="#addcol"/></svg></span>
      </div>
      <div class="ol-rows">
        <div class="row">
          <svg class="i26 r-scene"><use href="#coll"/></svg><span>场景集合</span>
        </div>
        <div class="row alt">
          <svg class="ch-big r-coll-ch"><use href="#chev-d"/></svg>
          <span class="ic-hl"><svg class="i26"><use href="#coll"/></svg></span><span class="r-coll-t">Collection</span>
          <span class="row-end"><span class="check">✔</span><svg class="i26"><use href="#eye"/></svg><svg class="i26"><use href="#rcam"/></svg></span>
        </div>
        <div class="row obj">
          <svg class="ch-big"><use href="#chev-r"/></svg><svg class="i26"><use href="#camera-o"/></svg><span class="o-name w89">Camera</span>
          <span class="ic-hl"><svg class="i24"><use href="#camera-g"/></svg></span>
          <span class="row-end"><svg class="i26"><use href="#eye"/></svg><svg class="i26"><use href="#rcam"/></svg></span>
        </div>
        <div class="row obj alt">
          <svg class="ch-big"><use href="#chev-r"/></svg><svg class="i26"><use href="#light-o"/></svg><span class="o-name w70">Light</span>
          <svg class="i26"><use href="#light-g"/></svg>
          <span class="row-end"><svg class="i26"><use href="#eye"/></svg><svg class="i26"><use href="#rcam"/></svg></span>
        </div>
        <div class="row obj">
          <svg class="ch-big"><use href="#chev-r"/></svg><span class="ic-hl"><svg class="i24"><use href="#mesh-o"/></svg></span><span class="o-name w81">苏珊娜</span>
          <svg class="i26"><use href="#mesh-g"/></svg>
          <span class="row-end"><svg class="i26"><use href="#eye"/></svg><svg class="i26"><use href="#rcam"/></svg></span>
        </div>
        <div class="tree-line"></div>
      </div>
      <div class="float-logo"><svg viewBox="0 0 40 40"><path d="M11 11l7 5M29 11l-7 5M7 17l9 5M33 17l-9 5M17 26l1 9M23 26l-1 9" stroke="#0a0a0a" stroke-width="3.600" stroke-linecap="round"/></svg></div>
    </section>

    <section class="properties">
      <div class="pr-header">
        <span class="btn w46 ol"><svg class="i26" viewBox="0 0 28 28"><rect x="4" y="3" width="20" height="9" rx="4.500" fill="#e6e6e6"/><rect x="15" y="5" width="7" height="5" rx="2.500" fill="#333"/><rect x="4" y="16" width="20" height="9" rx="4.500" fill="#e6e6e6"/><rect x="15" y="18" width="7" height="5" rx="2.500" fill="#333"/></svg><svg class="ch"><use href="#chev-d"/></svg></span>
        <span class="search pr-search"><svg class="i24"><use href="#search"/></svg>搜索</span>
        <span class="btn w28 ol"><svg class="ch"><use href="#chev-d"/></svg></span>
      </div>
      <div class="pr-body">
        <aside class="pr-tabs">
          <div class="tg"><span class="ptab"><svg><use href="#p-tool"/></svg></span></div>
          <div class="tg">
            <span class="ptab"><svg><use href="#p-render"/></svg></span>
            <span class="ptab"><svg><use href="#p-output"/></svg></span>
            <span class="ptab grey"><svg><use href="#layers"/></svg></span>
            <span class="ptab grey"><svg><use href="#scene"/></svg></span>
            <span class="ptab"><svg><use href="#p-world"/></svg></span>
          </div>
          <div class="tg"><span class="ptab"><svg><use href="#p-archive"/></svg></span></div>
          <div class="tg">
            <span class="ptab act orange"><svg><use href="#object"/></svg></span>
            <span class="ptab"><svg><use href="#p-wrench"/></svg></span>
            <span class="ptab"><svg><use href="#p-part"/></svg></span>
            <span class="ptab"><svg><use href="#p-phys"/></svg></span>
            <span class="ptab"><svg><use href="#p-const"/></svg></span>
            <span class="ptab"><svg><use href="#mesh-g"/></svg></span>
            <span class="ptab"><svg><use href="#p-mat"/></svg></span>
          </div>
          <div class="tg"><span class="ptab"><svg><use href="#p-tex"/></svg></span></div>
        </aside>
        <div class="pr-main">
          <div class="ctx"><svg class="i24"><use href="#object"/></svg><span>苏珊娜</span><svg class="i24 ctx-pin"><use href="#pin"/></svg></div>
          <div class="name-field"><span class="nf-ico"><svg class="i26"><use href="#object"/></svg><svg class="ch"><use href="#chev-d"/></svg></span><span class="nf-text">苏珊娜</span></div>

          <div class="panel open">
            <div class="p-head"><svg class="ch-big"><use href="#chev-d"/></svg><span>变换</span><i class="grip"></i></div>
            <div class="form">
              <div class="f-row"><label>位置 X</label><span class="field top">0 m</span><svg class="i26"><use href="#lock"/></svg><i class="dot"></i></div>
              <div class="f-row"><label>Y</label><span class="field">0 m</span><svg class="i26"><use href="#lock"/></svg><i class="dot"></i></div>
              <div class="f-row"><label>Z</label><span class="field bot">0 m</span><svg class="i26"><use href="#lock"/></svg><i class="dot"></i></div>
            </div>
            <div class="form">
              <div class="f-row"><label>旋转 X</label><span class="field top">0°</span><svg class="i26"><use href="#lock"/></svg><i class="dot"></i></div>
              <div class="f-row"><label>Y</label><span class="field">0°</span><svg class="i26"><use href="#lock"/></svg><i class="dot"></i></div>
              <div class="f-row"><label>Z</label><span class="field bot">0°</span><svg class="i26"><use href="#lock"/></svg><i class="dot"></i></div>
            </div>
            <div class="form">
              <div class="f-row"><label>模式</label><span class="drop">XYZ 欧拉<svg class="ch"><use href="#chev-d"/></svg></span><span class="lock-gap"></span><i class="dot"></i></div>
            </div>
            <div class="form">
              <div class="f-row"><label>缩放 X</label><span class="field top">1.000</span><svg class="i26"><use href="#lock"/></svg><i class="dot"></i></div>
              <div class="f-row"><label>Y</label><span class="field">1.000</span><svg class="i26"><use href="#lock"/></svg><i class="dot"></i></div>
              <div class="f-row"><label>Z</label><span class="field bot">1.000</span><svg class="i26"><use href="#lock"/></svg><i class="dot"></i></div>
            </div>
            <div class="sub-head"><svg class="ch-big"><use href="#chev-r"/></svg><span>变换增量</span></div>
          </div>

          <div class="panel closed"><svg class="ch-big"><use href="#chev-r"/></svg><span>关系</span><i class="grip"></i></div>
          <div class="panel closed"><svg class="ch-big"><use href="#chev-r"/></svg><span>集合</span><i class="grip"></i></div>
          <div class="panel closed"><svg class="ch-big"><use href="#chev-r"/></svg><span>实例化</span><i class="grip"></i></div>
          <div class="panel closed"><svg class="ch-big"><use href="#chev-r"/></svg><span>运动路径</span><i class="grip"></i></div>
          <div class="panel closed"><svg class="ch-big"><use href="#chev-r"/></svg><span>可见性</span><i class="grip"></i></div>
          <div class="panel closed"><svg class="ch-big"><use href="#chev-r"/></svg><span>视图显示</span><i class="grip"></i></div>
          <div class="panel closed"><svg class="ch-big"><use href="#chev-r"/></svg><span>线条画</span><i class="grip"></i></div>
          <div class="panel closed"><svg class="ch-big"><use href="#chev-r"/></svg><span>自定义属性</span><i class="grip"></i></div>
        </div>
      </div>
    </section>
  </div>
</main>

<footer class="statusbar">
  <div class="st-item i1"><svg class="mouse"><use href="#m-left"/></svg><span>选择 (切换)</span></div>
  <div class="st-item i2"><svg class="mouse"><use href="#m-mid"/></svg><span>滑动视图</span></div>
  <div class="st-item i3"><svg class="mouse"><use href="#m-right"/></svg><span>套索选择</span></div>
  <div class="st-right"><svg class="i26"><use href="#globe-off"/></svg><span class="st-ver">4.2.1</span></div>
</footer>
</body>
</html>
```

FILE: styles.css
```css
* { box-sizing: border-box; }
html, body { margin: 0; padding: 0; }
body {
  width: 3840px; height: 2100px; overflow: hidden;
  background: #181818; color: #e0e0e0;
  font-family: Inter, "Noto Sans CJK SC", sans-serif;
  font-size: 16.8px; line-height: 1;
  display: flex; flex-direction: column;
}
.defs { position: absolute; width: 0; height: 0; }
svg { display: block; flex: none; overflow: visible; }
i { display: block; font-style: normal; }

.i24 { width: 24px; height: 24px; }
.i26 { width: 26px; height: 26px; }
.ch { width: 11px; height: 11px; color: #d8d8d8; }
.ch-big { width: 15px; height: 15px; color: #cfcfcf; }

/* title bar */
.titlebar { height: 34px; background: #000; display: flex; align-items: center; flex: none; color: #f2f2f2; }
.title-logo { width: 24px; height: 24px; color: #ee7d16; margin-left: 3px; }
.title-text { margin-left: 5px; font-family: "Open Sans", "Noto Sans CJK SC", sans-serif; font-size: 18.4px; white-space: nowrap; }
.win-ctrls { margin-left: auto; display: flex; margin-right: 30px; gap: 54px; }
.win-ctrls svg { width: 14px; height: 14px; }

/* top bar */
.topbar { height: 40px; flex: none; background: #181818; display: flex; align-items: center; }
.top-logo { width: 24px; height: 24px; color: #e6e6e6; margin-left: 12px; }
.menus { display: flex; gap: 22.400px; margin-left: 15px; margin-top: -2px; }
.tabs { display: flex; gap: 1.400px; align-self: flex-end; margin-left: 35px; height: 31px; margin-bottom: 2px; }
.tab { width: 61.600px; height: 100%; display: flex; align-items: center; justify-content: center; background: #1e1e1e; color: #a2a2a2; border-radius: 6px 6px 0 0; white-space: nowrap; }
.tab:nth-child(4) { width: 85px; }
.tab:nth-child(5), .tab:nth-child(10) { width: 95px; }
.tab.active { background: #303030; color: #fff; }
.tab.add { width: 30px; font-size: 20px; }
.scene-box { margin-left: auto; margin-right: 11px; display: flex; gap: 9px; }
.slot { height: 29px; display: flex; border-radius: 6px; overflow: hidden; background: #282828; box-shadow: 0 0 0 1px #2f2f2f; }
.slot-ico { display: flex; align-items: center; justify-content: center; gap: 1px; }
.w44 { width: 44px; } .w46 { width: 46px; } .w28 { width: 28px; }
.slot-name { background: #1d1d1d; display: flex; align-items: center; padding-left: 11px; position: relative; color: #e0e0e0; }
.scene-slot .slot-name { padding-left: 13px; }
.w146 { width: 146px; } .w115 { width: 115px; }
.pin-end { margin-left: auto; margin-right: 3px; }
.slot-btn { width: 29px; background: #545454; display: flex; align-items: center; justify-content: center; }
.slot-btn + .slot-btn { background: #434343; }
.scene-slot { width: 247px; } .vl-slot { width: 219px; }
.vl-slot .slot-btn { width: 30px; }

/* workspace */
.workspace { flex: none; height: 1995px; display: grid; grid-template-columns: 3172px 665px; column-gap: 3px; }
.col-left { display: flex; flex-direction: column; gap: 3px; min-width: 0; }
.col-right { display: flex; flex-direction: column; gap: 3px; }

/* viewport */
.viewport {
  position: relative; height: 1841px; overflow: hidden; border-radius: 8px 8px 0 6px;
  background-color: #3f3f3f;
  background-image:
    linear-gradient(90deg, #4b4b4b 2px, transparent 2px),
    linear-gradient(#4b4b4b 2px, transparent 2px),
    linear-gradient(90deg, #464646 1px, transparent 1px),
    linear-gradient(#464646 1px, transparent 1px);
  background-size: 122.5px 100%, 100% 122.5px, 12.25px 100%, 100% 12.25px;
  background-position: 115px 0, 0 62px, 5.75px 0, 0 1.75px;
}
.axis-x { position: absolute; left: 0; right: 0; top: 919px; height: 2px; background: #5d8126; }
.axis-z { position: absolute; top: 0; bottom: 0; left: 1586px; width: 1px; background: #2b68ad; }
.cam-wire { position: absolute; left: 700px; top: 286px; width: 250px; height: 160px; }
.light-wire { position: absolute; left: 1693px; top: 182px; width: 32px; height: 32px; }
.monkey { position: absolute; left: 1400px; top: 766px; width: 360px; height: 300px; }

.vp-header { position: relative; height: 39px; padding-top: 5px; background: rgba(60,60,60,.92); display: flex; align-items: flex-start; }
.btn { height: 28px; background: #2a2a2a; border-radius: 6px; display: inline-flex; align-items: center; justify-content: center; gap: 2px; flex: none; box-shadow: 0 1px 0 #333; overflow: hidden; }
.btn-text { margin: 0 4px 0 6px; }
.hdr-left { width: 1419px; display: flex; align-items: center; padding-left: 13px; gap: 9px; }
.mode { width: 130px; }
.hdr-menu { display: flex; gap: 22.400px; margin-left: 11px; }
.hdr-center { width: 1383px; display: flex; gap: 9px; }
.orient { width: 89px; }
.split { justify-content: flex-start; gap: 0; }
.w73 { width: 73px; } .w56 { width: 56px; } .w26 { width: 26px; } .w140 { width: 140px; }
.seg { height: 100%; display: flex; align-items: center; justify-content: center; width: 28px; flex: none; gap: 1px; }
.seg.grow { flex: 1 1 auto; width: auto; }
.seg.gray { background: #545454; }
.seg.blue { background: #4772b3; }
.seg.dim { opacity: .65; }
.seg.sh { width: 28px; margin-right: 0; }
.hdr-right { display: flex; gap: 9px; }
.hdr-right .w56 { width: 56px; }
.hdr-right .w26 { width: 26px; }

.tool-row { position: relative; height: 36px; display: flex; justify-content: space-between; }
.tool-sel { width: 164px; background: rgba(56,56,56,.9); border-radius: 0 0 8px 0; padding: 4px 0 0 12px; }
.sel-group { display: flex; width: 139px; height: 28px; border-radius: 6px; overflow: hidden; }
.sel { flex: 1; background: #545454; display: flex; align-items: center; justify-content: center; border-left: 1px solid #3d3d3d; }
.sel:first-child { border-left: 0; }
.sel.on { background: #4772b3; }
.sel svg { width: 24px; height: 24px; }
.tool-opt { width: 93px; background: rgba(56,56,56,.9); border-radius: 0 0 0 8px; padding: 4px 11px 0 13px; }
.opt-btn { width: 69px; height: 28px; background: #2a2a2a; border-radius: 6px; display: flex; align-items: center; justify-content: center; gap: 5px; }

.vp-body { position: relative; display: flex; margin-top: 13px; }
.toolbar { width: 58px; margin-left: 13px; display: flex; flex-direction: column; gap: 9px; }
.tgroup { border-radius: 6px; overflow: hidden; display: flex; flex-direction: column; background: #282828; box-shadow: 0 1px 0 #333; }
.tool { display: flex; align-items: center; justify-content: center; background: #282828; border-bottom: 1px solid #3a3a3a; }
.tool:last-child { border-bottom: 0; }
.tool svg { width: 40px; height: 40px; }
.tool.on { background-color: #4772b3; }
.tri { background-image: linear-gradient(135deg, transparent 50%, #8b8b8b 50%); background-repeat: no-repeat; background-size: 6px 6px; background-position: right 3px bottom 3px; }
.h48 { height: 48px; } .h49 { height: 49px; } .h50 { height: 50px; }
.vp-info { margin-left: 26px; line-height: 27px; margin-top: -2px; color: #f0f0f0; text-shadow: 1px 1px 1px #111; }

.npanel-tab { position: absolute; left: 3160px; top: 97px; width: 12px; height: 20px; background: #333; border-radius: 4px 0 0 4px; display: flex; align-items: center; justify-content: center; }
.ch-l { width: 11px; height: 11px; }
.orient-gizmo { position: absolute; left: 3025px; top: 78px; width: 144px; height: 144px; }
.gz-t { font-size: 16px; font-weight: 700; text-anchor: middle; font-family: Inter, sans-serif; }
.gz-z { fill: #13315e; } .gz-y { fill: #2c4205; } .gz-x { fill: #5e0c20; }
.nav-btns { position: absolute; left: 3117px; top: 211px; display: flex; flex-direction: column; gap: 3px; }
.nav { width: 42px; height: 42px; border-radius: 50%; background: #353535; display: flex; align-items: center; justify-content: center; }
.nav svg { width: 26px; height: 26px; }

/* timeline */
.timeline { position: relative; flex: 1; background: #303030; border-radius: 6px; overflow: hidden; display: flex; flex-direction: column; }
.tl-header { height: 37px; flex: none; display: flex; align-items: center; background: #303030; }
.tb { height: 29px; background: #2a2a2a; box-shadow: 0 0 0 1px #383838; }
.tl-left { width: 1453px; display: flex; align-items: center; padding-left: 11px; gap: 8px; }
.tl-pop { width: 140px; gap: 0; }
.pop { flex: 1; height: 100%; display: flex; align-items: center; gap: 14px; padding-left: 11px; color: #e0e0e0; }
.pop.bl { border-left: 1px solid #3b3b3b; padding-left: 10px; }
.dimmer { margin-left: 7px; color: #d0d0d0; }
.tl-center { width: 1309px; display: flex; gap: 9px; }
.seg.rec { width: 28px; }
.transport { display: flex; width: 172px; height: 29px; border-radius: 6px; overflow: hidden; }
.transport span { flex: 1; background: #545454; display: flex; align-items: center; justify-content: center; border-left: 1px solid #3d3d3d; }
.transport span:first-child { border-left: 0; }
.transport svg { width: 22px; height: 22px; }
.tl-right { display: flex; gap: 8px; }
.num-cur { width: 107px; height: 29px; background: #545454; border-radius: 6px; display: flex; align-items: center; justify-content: center; }
.range { display: flex; width: 285px; height: 29px; border-radius: 6px; overflow: hidden; background: #545454; }
.r-clock { width: 29px; display: flex; align-items: center; justify-content: center; background: #4a4a4a; }
.r-f { flex: 1; border-left: 1px solid #3d3d3d; display: flex; align-items: center; justify-content: space-between; padding: 0 20px 0 23px; }
.r-end { flex: none; width: 129px; padding: 0 10px 0 23px; }

.ruler { height: 35px; flex: none; background: #1d1d1d; display: flex; padding-left: 165px; align-items: center; color: #a8a8a8; }
.ruler span { width: 118px; flex: none; text-align: center; }
.tl-body {
  flex: 1;
  background-color: #303030;
  background-image:
    linear-gradient(90deg, rgba(0,0,0,.22) 118px, transparent 118px, transparent 3055px, #0c0c0c 3055px, #0c0c0c 3056px, rgba(0,0,0,.25) 3056px),
    linear-gradient(90deg, #222 1px, transparent 1px);
  background-size: 100% 100%, 59px 100%;
  background-position: 0 0, 47px 0;
}
.playline { position: absolute; left: 117px; top: 66px; bottom: 0; width: 2px; background: #4772b3; }
.playhead { position: absolute; left: 100px; top: 41px; width: 35px; height: 27px; background: #4772b3; border-radius: 6px; color: #fff; display: flex; align-items: center; justify-content: center; }
.hscroll { position: absolute; left: 12px; width: 3146px; top: 135px; height: 13px; background: #545454; border-radius: 7px; display: flex; justify-content: space-between; padding: 2px 3px; }
.hscroll i { width: 9px; height: 9px; border-radius: 50%; background: #333; }
.vscroll { position: absolute; left: 3165px; top: 50px; width: 5px; height: 72px; background: #3a3a3a; border-radius: 3px; }

/* outliner */
.outliner { position: relative; height: 640px; flex: none; border-radius: 8px; overflow: hidden; background: repeating-linear-gradient(#282828 0 29px, #2b2b2b 29px 58px); }
.ol-header { height: 39px; display: flex; align-items: center; background: #2d2d2d; padding-left: 13px; }
.ol { background: #2a2a2a; box-shadow: 0 0 0 1px #3a3a3a; }
.ol-header > .btn:nth-child(2) { margin-left: 9px; }
.search { height: 28px; border-radius: 6px; background: #202020; box-shadow: 0 0 0 1px #3a3a3a; display: flex; align-items: center; gap: 5px; padding-left: 3px; color: #707070; }
.ol-search { width: 172px; margin-left: 122px; margin-right: 169px; }
.ol-header > .btn:nth-child(5) { margin-left: 9px; }
.gray-btn { background: #505050; }
.ol-rows { position: relative; }
.row { height: 29px; display: flex; align-items: center; position: relative; color: #d8d8d8; padding-left: 32px; }
.row.alt { background: #2c2c2c; }
.row:first-child { padding-left: 30px; gap: 0; }
.r-scene + span { margin-left: 6px; }
.r-coll-ch { margin-left: 4px; }
.row .ic-hl { width: 29px; height: 29px; border-radius: 6px; background: #4a4a4a; display: flex; align-items: center; justify-content: center; }
.row.alt .ic-hl { margin-left: 9px; }
.r-coll-t { margin-left: 2px; }
.obj { padding-left: 66px; }
.obj .ch-big { margin-right: 8px; }
.obj .ic-hl { margin-left: -2px; }
.o-name { margin-left: 5px; }
.w89 { width: 89px; } .w70 { width: 70px; } .w81 { width: 81px; }
.o-name + .ic-hl { margin-left: 0; }
.row-end { position: absolute; right: 16px; top: 0; height: 29px; display: flex; align-items: center; gap: 3px; }
.check { width: 15px; height: 15px; margin-right: 3px; background: #e6e6e6; color: #222; border-radius: 3px; font-size: 12px; display: flex; align-items: center; justify-content: center; font-family: "DejaVu Sans", sans-serif; }
.tree-line { position: absolute; left: 44px; top: 64px; height: 73px; width: 1px; background: #555; }
.float-logo {
  position: absolute; left: 498px; top: 563px; width: 72px; height: 72px; border-radius: 50%;
  background: conic-gradient(from 330deg, #72cde0, #7fb5e8, #b8a8ee, #ef9fd8, #e8a8dc, #b0c0e8, #72cde0);
  display: flex; align-items: center; justify-content: center;
}
.float-logo svg { width: 62px; height: 62px; border-radius: 50%; background: #707070; padding: 11px; }

/* properties */
.properties { flex: 1; background: #303030; border-radius: 8px 8px 0 0; overflow: hidden; display: flex; flex-direction: column; }
.pr-header { height: 37px; flex: none; display: flex; align-items: center; padding-left: 12px; }
.pr-search { width: 173px; margin-left: 191px; margin-right: 204px; }
.pr-body { flex: 1; display: flex; min-height: 0; }
.pr-tabs { width: 43px; background: #1d1d1d; padding-top: 12px; flex: none; }
.tg { border-bottom: 1px solid #282828; margin-bottom: 10px; }
.ptab { height: 40px; display: flex; align-items: center; justify-content: center; padding-left: 5px; color: #c0c0c0; }
.ptab svg { width: 26px; height: 26px; }
.ptab.act { margin-left: 5px; padding-left: 0; background: #303030; border-radius: 6px 0 0 6px; }
.orange { color: #e39a5e; }
.pr-main { flex: 1; padding: 0 11px 0 11px; min-width: 0; }
.ctx { height: 52px; display: flex; align-items: center; padding-left: 4px; }
.ctx span { margin-left: 12px; }
.ctx-pin { margin-left: auto; margin-right: 0; }
.name-field { margin-top: 13px; height: 29px; background: #1d1d1d; border-radius: 6px; display: flex; align-items: center; box-shadow: 0 0 0 1px #2a2a2a; margin-left: 1px; }
.nf-ico { width: 46px; height: 100%; background: #2a2a2a; border-radius: 6px 0 0 6px; display: flex; align-items: center; justify-content: center; gap: 2px; border-right: 1px solid #3a3a3a; }
.nf-text { margin-left: 11px; }
.panel { background: #3d3d3d; border-radius: 8px; }
.panel.open { margin-top: 14px; padding-bottom: 2px; }
.p-head { height: 38px; display: flex; align-items: center; padding-left: 11px; }
.p-head span { margin-left: 5px; }
.grip { width: 15px; height: 8px; margin-left: auto; margin-right: 11px; background: radial-gradient(circle, #8c8c8c 1.100px, transparent 1.300px) 0 0 / 3.750px 4px; }
.form { margin-top: 7px; }
.p-head + .form { margin-top: 11px; }
.f-row { display: grid; grid-template-columns: 224px 303px 28px 1fr; height: 29px; align-items: center; }
.f-row label { text-align: right; color: #d8d8d8; }
.field { grid-column: 2; margin-left: 14px; width: 289px; height: 28px; background: #545454; display: flex; align-items: center; justify-content: center; color: #e6e6e6; }
.field.top { border-radius: 6px 0 0 0; }
.field.bot { border-radius: 0 0 0 6px; box-shadow: 0 2px 0 #353535; }
.drop { grid-column: 2; margin-left: 14px; width: 289px; height: 28px; background: #282828; border-radius: 6px; display: flex; align-items: center; justify-content: space-between; padding: 0 9px 0 11px; }
.dot { width: 7px; height: 7px; border-radius: 50%; background: #d0d0d0; margin-left: 12px; }
.sub-head { margin-top: 15px; height: 30px; display: flex; align-items: center; padding-left: 33px; }
.sub-head span { margin-left: 4px; }
.panel.closed { height: 36px; margin-top: 2px; display: flex; align-items: center; padding-left: 11px; }
.panel.closed > span { margin-left: 5px; }

/* status bar */
.statusbar { height: 31px; flex: none; background: #181818; display: flex; align-items: center; color: #a0a0a0; position: relative; font-size: 16.8px; }
.st-item { display: flex; align-items: center; gap: 5px; }
.mouse { width: 18px; height: 24px; }
.i1 { margin-left: 17px; width: 283px; }
.i2 { width: 284px; }
.st-right { margin-left: auto; display: flex; align-items: center; margin-right: 20px; }
.st-ver { border-left: 1px solid #777; padding-left: 6px; margin-left: 7px; height: 20px; display: flex; align-items: center; }
```
